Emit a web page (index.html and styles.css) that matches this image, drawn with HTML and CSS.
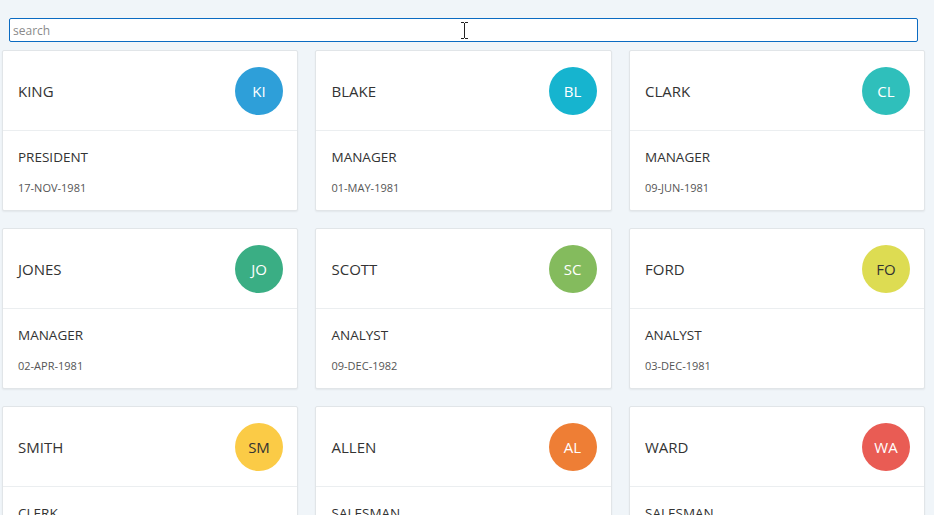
FILE: index.html
```html
<!DOCTYPE html>
<html>
<head>
<meta charset="utf-8">
<link rel="stylesheet" href="styles.css">
</head>
<body>
<div class="page">
  <div class="search-row">
    <input class="search" type="text" placeholder="search">
    <svg class="ibeam" width="9" height="17" viewBox="0 0 9 17"><path d="M1 0.5h3M5 0.5h3M4.5 1v15M1 16.5h3M5 16.5h3" stroke="#222" stroke-width="1" fill="none"/></svg>
  </div>
  <div class="grid">
    <div class="card"><div class="head"><span class="name">KING</span><span class="avatar c-ki">KI</span></div><div class="body"><div class="job">PRESIDENT</div><div class="date">17-NOV-1981</div></div></div>
    <div class="card"><div class="head"><span class="name">BLAKE</span><span class="avatar c-bl">BL</span></div><div class="body"><div class="job">MANAGER</div><div class="date">01-MAY-1981</div></div></div>
    <div class="card"><div class="head"><span class="name">CLARK</span><span class="avatar c-cl">CL</span></div><div class="body"><div class="job">MANAGER</div><div class="date">09-JUN-1981</div></div></div>
    <div class="card"><div class="head"><span class="name">JONES</span><span class="avatar c-jo">JO</span></div><div class="body"><div class="job">MANAGER</div><div class="date">02-APR-1981</div></div></div>
    <div class="card"><div class="head"><span class="name">SCOTT</span><span class="avatar c-sc">SC</span></div><div class="body"><div class="job">ANALYST</div><div class="date">09-DEC-1982</div></div></div>
    <div class="card"><div class="head"><span class="name">FORD</span><span class="avatar c-fo dark">FO</span></div><div class="body"><div class="job">ANALYST</div><div class="date">03-DEC-1981</div></div></div>
    <div class="card"><div class="head"><span class="name">SMITH</span><span class="avatar c-sm dark">SM</span></div><div class="body"><div class="job">CLERK</div><div class="date">17-DEC-1980</div></div></div>
    <div class="card"><div class="head"><span class="name">ALLEN</span><span class="avatar c-al">AL</span></div><div class="body"><div class="job">SALESMAN</div><div class="date">20-FEB-1981</div></div></div>
    <div class="card"><div class="head"><span class="name">WARD</span><span class="avatar c-wa">WA</span></div><div class="body"><div class="job">SALESMAN</div><div class="date">22-FEB-1981</div></div></div>
  </div>
</div>
</body>
</html>
```
FILE: styles.css
```css
html, body {
  margin: 0;
  padding: 0;
  background: #f0f5f9;
  font-family: "Open Sans", "Noto Sans", sans-serif;
  color: #333;
  overflow: hidden;
  height: 515px;
}
.page {
  padding: 18px 0 0 1.5px;
}
.search-row {
  position: relative;
  padding-left: 7.5px;
  margin-bottom: 8px;
}
.search {
  display: block;
  box-sizing: border-box;
  width: 909px;
  height: 24px;
  margin: 0;
  border: 1px solid #0b6bc2;
  border-radius: 2px;
  background: #fff;
  outline: none;
  padding: 0 3px;
  font-family: "Open Sans", sans-serif;
  font-size: 12px;
  color: #333;
}
.search::placeholder {
  color: #8a8a8a;
}
.ibeam {
  position: absolute;
  left: 458px;
  top: 4px;
}
.grid {
  display: grid;
  grid-template-columns: repeat(3, 296.5px);
  column-gap: 17px;
  row-gap: 17px;
}
.card {
  box-sizing: border-box;
  height: 161px;
  background: #fff;
  border: 1px solid #e1e5e8;
  border-radius: 2px;
  box-shadow: 0 1px 2px rgba(0,0,0,0.06);
}
.head {
  box-sizing: border-box;
  height: 80px;
  display: flex;
  align-items: center;
  justify-content: space-between;
  padding: 0 14px 0 15.5px;
  border-bottom: 1px solid #ebeef0;
}
.name {
  font-size: 15px;
  color: #333;
}
.avatar {
  width: 48px;
  height: 48px;
  border-radius: 50%;
  display: flex;
  align-items: center;
  justify-content: center;
  font-size: 15px;
  color: #fff;
}
.avatar.dark { color: #333; }
.c-ki { background: #2e9fd9; }
.c-bl { background: #16b4cf; }
.c-cl { background: #2fbfbb; }
.c-jo { background: #3aae84; }
.c-sc { background: #84bb5d; }
.c-fo { background: #dddc52; }
.c-sm { background: #fbcb46; }
.c-al { background: #ee7e35; }
.c-wa { background: #e95c54; }
.body {
  padding: 16px 15.5px 0;
}
.job {
  font-size: 13.5px;
  line-height: 20px;
  color: #333;
}
.date {
  margin-top: 13px;
  font-size: 11px;
  line-height: 16px;
  color: #555;
}
```
